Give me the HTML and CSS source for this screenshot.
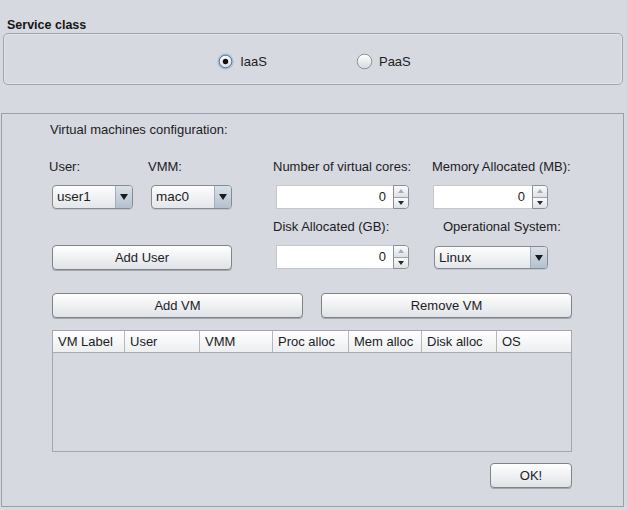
FILE: index.html
```html
<!DOCTYPE html>
<html>
<head>
<meta charset="utf-8">
<link rel="stylesheet" href="styles.css">
</head>
<body>
<div class="legend">Service class</div>
<div class="service-box">
  <label class="radio">
    <svg width="17" height="17" viewBox="0 0 17 17"><defs><linearGradient id="rg1" x1="0" y1="0" x2="0" y2="1"><stop offset="0" stop-color="#ffffff"/><stop offset="1" stop-color="#d9dde3"/></linearGradient></defs><circle cx="8.5" cy="8.5" r="8.3" fill="#a9c5e0"/><circle cx="8.5" cy="8.5" r="6.3" fill="url(#rg1)" stroke="#54708f" stroke-width="1"/><circle cx="8.5" cy="8.5" r="2.7" fill="#111"/></svg>
    <span>IaaS</span>
  </label>
  <label class="radio">
    <svg width="17" height="17" viewBox="0 0 17 17"><defs><linearGradient id="rg2" x1="0" y1="0" x2="0" y2="1"><stop offset="0" stop-color="#ffffff"/><stop offset="1" stop-color="#d6dadf"/></linearGradient></defs><circle cx="8.5" cy="8.5" r="7.3" fill="url(#rg2)" stroke="#8a9098" stroke-width="1"/></svg>
    <span>PaaS</span>
  </label>
</div>

<div class="vm-panel">
  <div class="panel-title">Virtual machines configuration:</div>
  <div class="config-grid">
    <div class="lbl">User:</div>
    <div class="lbl">VMM:</div>
    <div class="lbl">Number of virtual cores:</div>
    <div class="lbl">Memory Allocated (MB):</div>

    <div class="combo w-user"><span class="combo-value">user1</span><span class="combo-arrow"><svg width="8" height="6" viewBox="0 0 8 6"><path d="M0 0H8L4 6Z" fill="#1a1a1a"/></svg></span></div>
    <div class="combo w-vmm"><span class="combo-value">mac0</span><span class="combo-arrow"><svg width="8" height="6" viewBox="0 0 8 6"><path d="M0 0H8L4 6Z" fill="#1a1a1a"/></svg></span></div>
    <div class="spinner w-sp1"><span class="spin-field">0</span><span class="spin-btns"><span class="spin-btn"><svg width="6" height="4" viewBox="0 0 6 4"><path d="M0 4H6L3 0Z" fill="#a8adb4"/></svg></span><span class="spin-btn"><svg width="6" height="4" viewBox="0 0 6 4"><path d="M0 0H6L3 4Z" fill="#2a2a2a"/></svg></span></span></div>
    <div class="spinner w-sp2"><span class="spin-field">0</span><span class="spin-btns"><span class="spin-btn"><svg width="6" height="4" viewBox="0 0 6 4"><path d="M0 4H6L3 0Z" fill="#a8adb4"/></svg></span><span class="spin-btn"><svg width="6" height="4" viewBox="0 0 6 4"><path d="M0 0H6L3 4Z" fill="#2a2a2a"/></svg></span></span></div>

    <div class="lbl span-empty"></div>
    <div class="lbl">Disk Allocated (GB):</div>
    <div class="lbl os-lbl">Operational System:</div>

    <button class="btn add-user">Add User</button>
    <div class="spinner w-sp1"><span class="spin-field">0</span><span class="spin-btns"><span class="spin-btn"><svg width="6" height="4" viewBox="0 0 6 4"><path d="M0 4H6L3 0Z" fill="#a8adb4"/></svg></span><span class="spin-btn"><svg width="6" height="4" viewBox="0 0 6 4"><path d="M0 0H6L3 4Z" fill="#2a2a2a"/></svg></span></span></div>
    <div class="combo w-os"><span class="combo-value">Linux</span><span class="combo-arrow"><svg width="8" height="6" viewBox="0 0 8 6"><path d="M0 0H8L4 6Z" fill="#1a1a1a"/></svg></span></div>
  </div>

  <div class="actions">
    <button class="btn">Add VM</button>
    <button class="btn">Remove VM</button>
  </div>

  <div class="vm-table">
    <div class="thead">
      <div class="th">VM Label</div>
      <div class="th">User</div>
      <div class="th">VMM</div>
      <div class="th">Proc alloc</div>
      <div class="th">Mem alloc</div>
      <div class="th">Disk alloc</div>
      <div class="th">OS</div>
    </div>
    <div class="tbody"></div>
  </div>

  <div class="ok-row">
    <button class="btn ok">OK!</button>
  </div>
</div>
</body>
</html>
```

FILE: styles.css
```css
* { box-sizing: border-box; }

body {
  margin: 0;
  width: 627px;
  height: 510px;
  overflow: hidden;
  background: #d6d9df;
  font-family: "Liberation Sans", Arial, sans-serif;
  font-size: 13px;
  color: #1c1c24;
}

.legend {
  margin: 17px 0 0 7px;
  line-height: 16px;
  font-size: 12.5px;
  font-weight: bold;
  color: #151515;
}

.service-box {
  margin: 0 0 0 3px;
  width: 620px;
  height: 52px;
  border: 1px solid #a2a6ac;
  border-radius: 5px;
  box-shadow: inset 0 0 0 1px #e2e4e8;
  display: flex;
  justify-content: center;
  align-items: center;
  gap: 89px;
  padding: 4px 0 0 2px;
}

.radio {
  display: flex;
  align-items: center;
  gap: 6px;
  line-height: 17px;
}

.radio svg { display: block; }

.vm-panel {
  margin: 28px 0 0 1px;
  width: 623px;
  height: 394px;
  border: 1px solid #9ca0a6;
  padding: 8px 0 0 47px;
  display: flex;
  flex-direction: column;
}

.panel-title {
  line-height: 16px;
  margin-left: 1px;
}

.config-grid {
  margin-top: 21px;
  width: 523px;
  display: grid;
  grid-template-columns: 99px 125px 159px 140px;
  grid-template-rows: 16px 24px 16px 25px;
  row-gap: 10px;
}

.lbl { line-height: 16px; white-space: nowrap; }
.span-empty { grid-column: 1 / 3; }
.os-lbl { margin-left: 11px; }

.combo {
  display: flex;
  height: 24px;
  border: 1px solid #868b92;
  border-radius: 4px;
  overflow: hidden;
  background: linear-gradient(#fdfdfe, #e3e6ea);
  box-shadow: 0 1px 0 #c2c6cc;
}
.combo-value {
  flex: 1;
  padding-left: 4px;
  line-height: 22px;
  font-size: 13.5px;
}
.combo-arrow {
  width: 17px;
  border-left: 1px solid #a4acb6;
  background: linear-gradient(#d9e1e9, #b3c0cd);
  display: flex;
  align-items: center;
  justify-content: center;
}
.w-user { width: 81px; margin-left: 3px; }
.w-vmm { width: 81px; margin-left: 3px; }
.w-os { width: 114px; margin-left: 2px; height: 23px; margin-top: 1px; }
.w-os .combo-value { line-height: 21px; }

.spinner {
  display: flex;
  height: 24px;
}
.w-sp1 { width: 133px; margin-left: 3px; }
.w-sp2 { width: 115px; margin-left: 1px; }

.spin-field {
  flex: 1;
  background: #fff;
  border: 1px solid #c3c6cb;
  border-right: none;
  text-align: right;
  padding-right: 7px;
  line-height: 22px;
}
.spin-btns {
  width: 16px;
  display: flex;
  flex-direction: column;
  border: 1px solid #8b9097;
  border-radius: 0 4px 4px 0;
  overflow: hidden;
}
.spin-btn {
  flex: 1;
  display: flex;
  align-items: center;
  justify-content: center;
  background: linear-gradient(#fbfbfc, #dde1e6);
}
.spin-btn + .spin-btn { border-top: 1px solid #9ea3aa; }
.spin-btn svg { display: block; }

.btn {
  font-family: inherit;
  font-size: 13px;
  color: #1c1c26;
  height: 25px;
  padding: 0;
  border: 1px solid #7f848b;
  border-radius: 4px;
  background: linear-gradient(#ffffff 0%, #f1f2f4 45%, #dfe2e6 100%);
  box-shadow: 0 1px 0 #a4a8ae;
}

.add-user {
  grid-column: 1 / 3;
  width: 180px;
  margin-left: 3px;
}

.actions {
  margin-top: 23px;
  margin-left: 3px;
  width: 520px;
  display: flex;
  gap: 18px;
}
.actions .btn { flex: 1; }

.vm-table {
  margin-top: 12px;
  margin-left: 3px;
  width: 520px;
  height: 122px;
  border: 1px solid #a3a7ad;
  display: flex;
  flex-direction: column;
}
.thead {
  display: grid;
  grid-template-columns: 72px 75px 73px 76px 73px 75px 1fr;
  height: 22px;
  background: linear-gradient(#ffffff, #eceef0);
  border-bottom: 1px solid #a7abb1;
}
.th {
  border-right: 1px solid #b4b8be;
  padding-left: 5px;
  line-height: 21px;
  white-space: nowrap;
}
.th:last-child { border-right: none; }
.tbody { flex: 1; }

.ok-row {
  margin-top: 11px;
  width: 523px;
  display: flex;
  justify-content: flex-end;
}
.ok { width: 82px; }
```
